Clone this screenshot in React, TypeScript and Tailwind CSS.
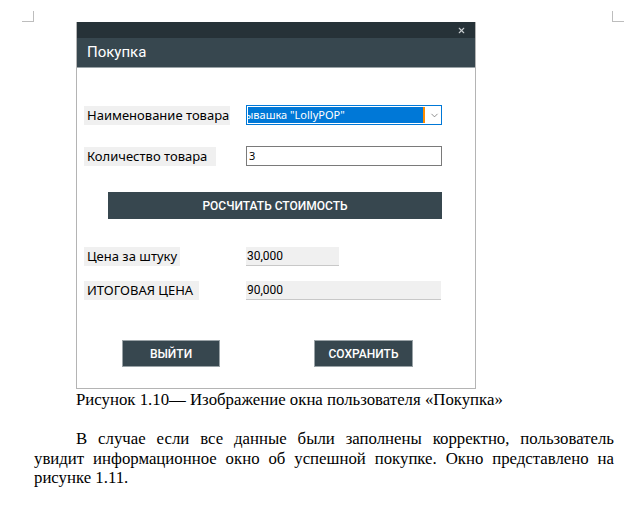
import { ChevronDown, X } from "lucide-react";

const ui = "font-['Noto_Sans',sans-serif]";
const roboto = "font-['Roboto',sans-serif]";

function FieldRow({
  label,
  labelW,
  children,
}: {
  label: string;
  labelW: string;
  children: React.ReactNode;
}) {
  return (
    <div className="flex items-center">
      <div className="w-[169px] pl-[7px]">
        <span className={`block ${labelW} h-[19px] bg-[#f0f0f0] pl-[3px] text-[13px] leading-[19px] text-black ${ui}`}>
          {label}
        </span>
      </div>
      {children}
    </div>
  );
}

export default function App() {
  return (
    <div className="relative w-[641px] h-[511px] bg-white overflow-hidden">
      {/* page corner marks */}
      <div className="absolute left-[22px] top-[11px] w-[12px] h-[11px] border-r border-b border-[#bdbdbd]" />
      <div className="absolute left-[612px] top-[11px] w-[12px] h-[11px] border-l border-b border-[#bdbdbd]" />

      <div className="pt-[22px] pl-[76px]">
        {/* window screenshot */}
        <div className="w-[400px] h-[367px] border-x border-b border-[#b4b4b4] flex flex-col">
          <div className="h-[16px] bg-[#263238] flex justify-end items-center pr-[9px]">
            <X className="w-[9px] h-[9px] text-[#c8cdd0]" strokeWidth={3} />
          </div>
          <div className={`h-[30px] bg-[#37474f] border-b border-[#9aa3a7] pl-[10px] text-[15px] leading-[29px] text-white ${roboto}`}>
            Покупка
          </div>

          <div className="flex flex-col pt-[37px]">
            <FieldRow label="Наименование товара" labelW="w-[146px]">
              <div className="w-[196px] h-[20px] border border-[#0078d7] flex items-center pl-[1px]">
                <div className={`w-[177px] h-[16px] bg-[#0078d7] border-r-2 border-[#ff8c00] overflow-hidden whitespace-nowrap text-[11px] leading-[16px] text-white ${ui}`}>
                  <span className="ml-[-3px]">ывашка "LollyPOP"</span>
                </div>
                <ChevronDown className="ml-[4px] w-[11px] h-[11px] text-[#606060]" strokeWidth={1.5} />
              </div>
            </FieldRow>

            <div className="mt-[21px]">
              <FieldRow label="Количество товара" labelW="w-[132px]">
                <div className={`w-[196px] h-[20px] border border-[#7a7a7a] pl-[2px] text-[11px] leading-[18px] text-black ${ui}`}>
                  3
                </div>
              </FieldRow>
            </div>

            <div className="mt-[26px] pl-[31px]">
              <div className={`w-[334px] h-[27px] bg-[#37474f] flex items-center justify-center text-[12px] font-medium text-white ${roboto}`}>
                РОСЧИТАТЬ СТОИМОСТЬ
              </div>
            </div>

            <div className="mt-[28px]">
              <FieldRow label="Цена за штуку" labelW="w-[96px]">
                <div className={`w-[93px] h-[19px] bg-[#f0f0f0] border-b border-[#c8c8c8] pl-[1px] text-[12px] leading-[18px] text-black ${roboto}`}>
                  30,000
                </div>
              </FieldRow>
            </div>

            <div className="mt-[15px]">
              <FieldRow label="ИТОГОВАЯ ЦЕНА" labelW="w-[115px]">
                <div className={`w-[195px] h-[19px] bg-[#f0f0f0] border-b border-[#c8c8c8] pl-[1px] text-[12px] leading-[18px] text-black ${roboto}`}>
                  90,000
                </div>
              </FieldRow>
            </div>

            <div className="mt-[40px] flex pl-[45px] gap-[94px]">
              <div className={`w-[98px] h-[27px] bg-[#37474f] border border-[#9aa3a7] flex items-center justify-center text-[12px] font-medium text-white ${roboto}`}>
                ВЫЙТИ
              </div>
              <div className={`w-[99px] h-[27px] bg-[#37474f] border border-[#9aa3a7] flex items-center justify-center text-[12px] font-medium text-white ${roboto}`}>
                СОХРАНИТЬ
              </div>
            </div>
          </div>
        </div>

        <p className="mt-[1px] text-[16.8px] leading-[20px] text-black font-['Liberation_Serif',serif]">
          Рисунок 1.10— Изображение окна пользователя «Покупка»
        </p>
      </div>

      <p className="ml-[34px] mt-[19px] w-[580px] indent-[42px] text-justify text-[16.8px] leading-[19.5px] text-black font-['Liberation_Serif',serif]">
        В случае если все данные были заполнены корректно, пользователь увидит информационное окно об успешной покупке. Окно представлено на рисунке 1.11.
      </p>
    </div>
  );
}
